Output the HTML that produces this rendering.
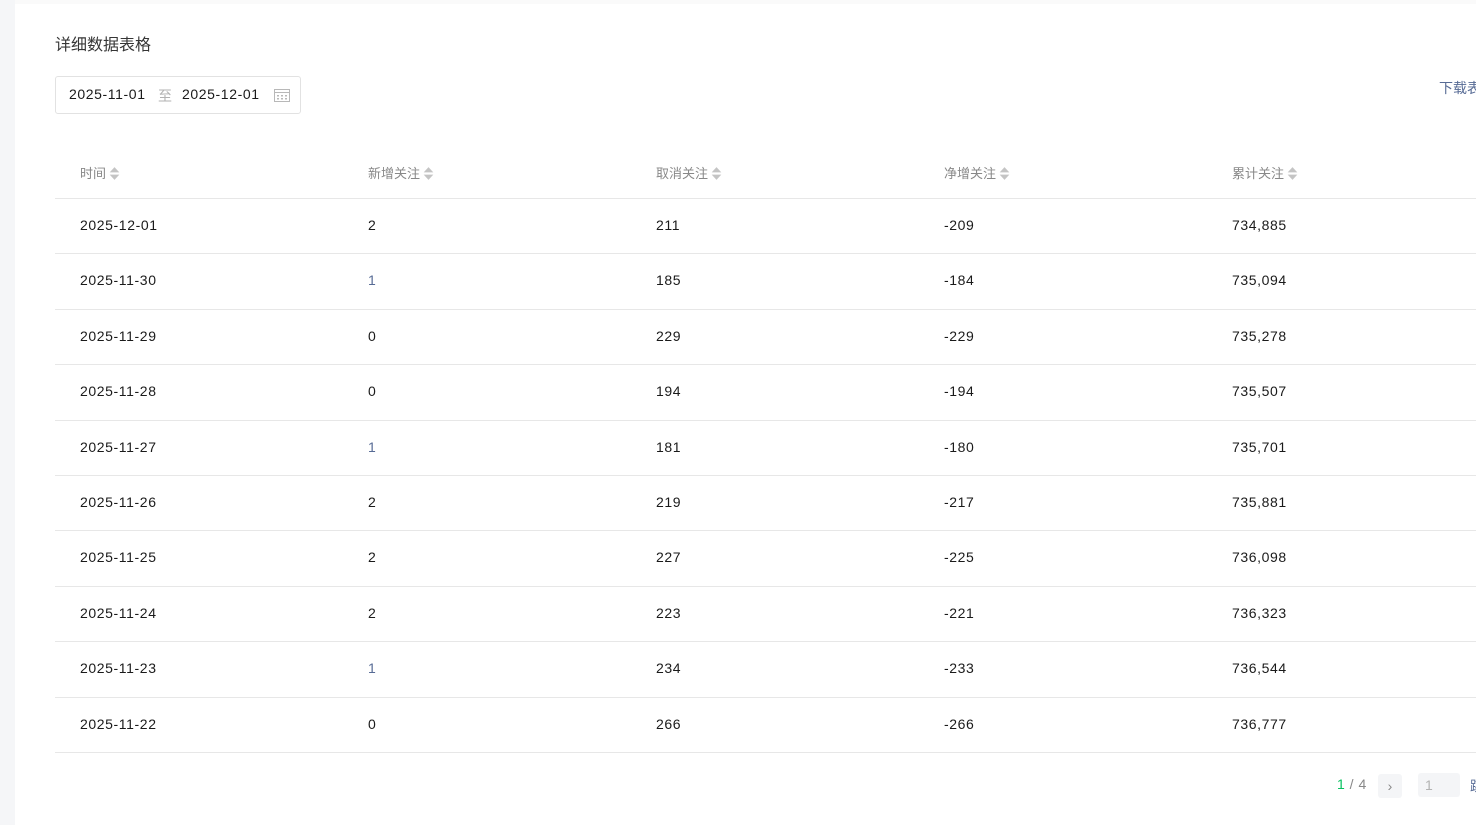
<!DOCTYPE html>
<html><head><meta charset="utf-8"><style>
*{margin:0;padding:0;box-sizing:border-box}
body{width:1476px;height:825px;background:#fff;font-family:"Liberation Sans","Noto Sans CJK SC",sans-serif;position:relative;overflow:hidden;color:#1a1a1a}
.left{position:absolute;left:0;top:0;width:15px;height:825px;background:#f5f6f8}
.top{position:absolute;left:15px;top:0;right:0;height:4px;background:#fafafa}
.title{position:absolute;left:55px;top:31px;font-size:16px;color:#353535}
.date{position:absolute;left:55px;top:76px;width:246px;height:38px;border:1px solid #e2e2e2;border-radius:3px;font-size:14px;color:#1a1a1a;letter-spacing:0.6px}
.date span{position:absolute;top:9px}
.dl{position:absolute;left:1439px;top:78px;font-size:14px;color:#576b95;white-space:nowrap}
.hd{position:absolute;top:163px;font-size:13px;color:#888}
.sort{display:inline-block;vertical-align:middle;margin-left:3px;width:11px;height:15px;position:relative;top:-1px}
.line{position:absolute;left:55px;right:0;height:1px;background:#e7e7e7}
.c{position:absolute;font-size:14px;color:#1a1a1a;letter-spacing:0.6px}
.b{color:#576b95}
</style></head><body>
<div class="left"></div><div class="top"></div>
<div class="title">详细数据表格</div>
<div class="date"><span style="left:13px">2025-11-01</span><span style="left:102px;color:#b2b2b2">至</span><span style="left:126px">2025-12-01</span>
<svg style="position:absolute;left:218px;top:11px" width="16" height="14" viewBox="0 0 16 14"><rect x="0.5" y="1.5" width="15" height="12" fill="none" stroke="#b8b8b8"/><line x1="0.5" y1="4.5" x2="15.5" y2="4.5" stroke="#b8b8b8"/><g fill="#b8b8b8"><rect x="3" y="7" width="2" height="1.5"/><rect x="7" y="7" width="2" height="1.5"/><rect x="11" y="7" width="2" height="1.5"/><rect x="3" y="10" width="2" height="1.5"/><rect x="7" y="10" width="2" height="1.5"/><rect x="11" y="10" width="2" height="1.5"/></g></svg></div>
<div class="dl">下载表格</div>
<div id="t"></div>
<div style="position:absolute;left:1337px;top:776px;font-size:14px;color:#888;letter-spacing:0.5px"><span style="color:#07c160">1</span> / 4</div>
<div style="position:absolute;left:1378px;top:774px;width:24px;height:24px;background:#f4f5f7;border-radius:3px;color:#888;font-size:14px;text-align:center;line-height:24px">›</div>
<div style="position:absolute;left:1418px;top:773px;width:42px;height:24px;background:#f4f5f7;border-radius:3px;color:#b2b2b2;font-size:14px;padding-left:7px;line-height:24px">1</div>
<div style="position:absolute;left:1470px;top:776px;font-size:14px;color:#576b95">跳</div>
<script>
var cols=[80,368,656,944,1232],h=["时间","新增关注","取消关注","净增关注","累计关注"];
var d=[["2025-12-01",2,211,-209,"734,885"],["2025-11-30",1,185,-184,"735,094"],["2025-11-29",0,229,-229,"735,278"],["2025-11-28",0,194,-194,"735,507"],["2025-11-27",1,181,-180,"735,701"],["2025-11-26",2,219,-217,"735,881"],["2025-11-25",2,227,-225,"736,098"],["2025-11-24",2,223,-221,"736,323"],["2025-11-23",1,234,-233,"736,544"],["2025-11-22",0,266,-266,"736,777"]];
var s="";
var arrow='<svg class="sort" width="11" height="15" viewBox="0 0 10 14"><path d="M0.5 6L5 1L9.5 6Z" fill="#c4c4c4"/><path d="M0.5 8L5 13L9.5 8Z" fill="#c4c4c4"/></svg>';
h.forEach(function(t,i){s+='<div class="hd" style="left:'+cols[i]+'px">'+t+arrow+'</div>'});
for(var r=0;r<10;r++){var y=198+r*55.4;s+='<div class="line" style="top:'+Math.round(y)+'px"></div>';
d[r].forEach(function(v,i){s+='<div class="c'+(i==1&&v==1?' b':'')+'" style="left:'+cols[i]+'px;top:'+Math.round(y+19)+'px">'+v+'</div>'});}
s+='<div class="line" style="top:752px"></div>';
document.getElementById("t").innerHTML=s;
</script>
</body></html>
